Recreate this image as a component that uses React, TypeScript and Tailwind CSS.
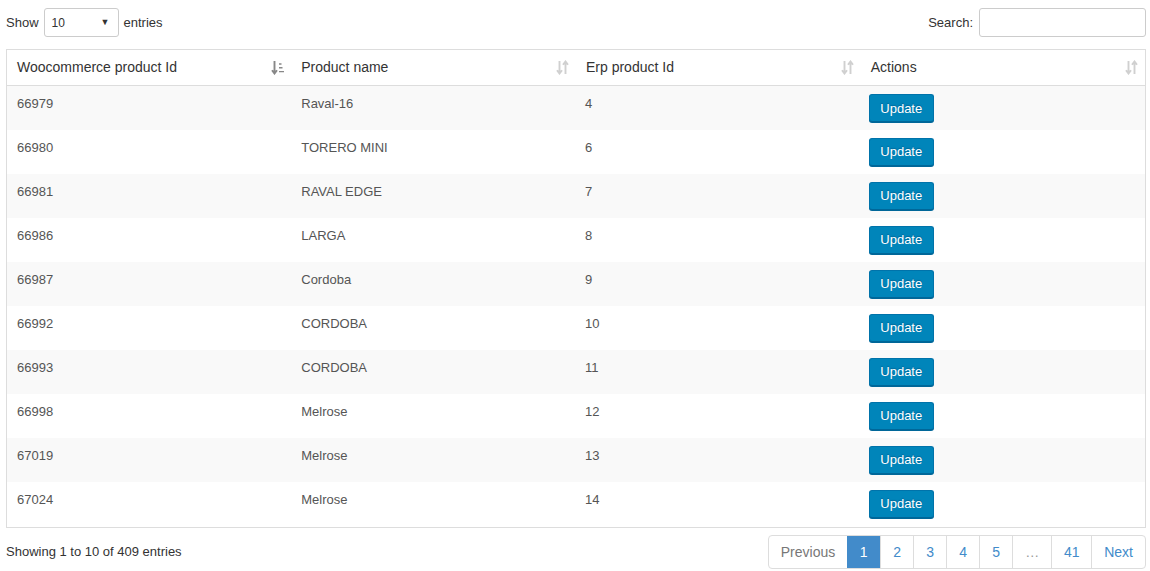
import React from 'react'

const rows = [
  { id: '66979', name: 'Raval-16', erp: '4' },
  { id: '66980', name: 'TORERO MINI', erp: '6' },
  { id: '66981', name: 'RAVAL EDGE', erp: '7' },
  { id: '66986', name: 'LARGA', erp: '8' },
  { id: '66987', name: 'Cordoba', erp: '9' },
  { id: '66992', name: 'CORDOBA', erp: '10' },
  { id: '66993', name: 'CORDOBA', erp: '11' },
  { id: '66998', name: 'Melrose', erp: '12' },
  { id: '67019', name: 'Melrose', erp: '13' },
  { id: '67024', name: 'Melrose', erp: '14' },
]

function SortBoth() {
  return (
    <svg width="13" height="15" viewBox="0 0 13 15" className="text-[#d0d0d0]">
      <path d="M3.5 1v12M1 10.2L3.5 13.5 6 10.2" stroke="currentColor" strokeWidth="1.9" fill="none" />
      <path d="M9.5 14V2M7 4.8L9.5 1.5 12 4.8" stroke="currentColor" strokeWidth="1.9" fill="none" />
    </svg>
  )
}

function SortDown() {
  return (
    <svg width="13" height="15" viewBox="0 0 13 15" className="text-[#888]">
      <path d="M3.5 1v12M1 10.2L3.5 13.5 6 10.2" stroke="currentColor" strokeWidth="1.9" fill="none" />
      <path d="M8 4h2.5M8 7.8h3.5M8 11.6h5" stroke="currentColor" strokeWidth="1.4" fill="none" />
    </svg>
  )
}

const headers = ['Woocommerce product Id', 'Product name', 'Erp product Id', 'Actions']

export default function App() {
  return (
    <div className="w-[1150px] h-[571px] bg-white text-[#333] font-['Liberation_Sans',Arial,sans-serif] text-[13px] pl-[6px] pr-[4px] pt-[8px]">
      <div className="flex items-center justify-between h-[29px]">
        <div className="flex items-center gap-[5px] text-[13px]">
          <span>Show</span>
          <div className="w-[75px] h-[29px] border border-[#ccc] rounded-[3px] flex items-center justify-between pl-[7px] pr-[8px] text-[12px]">
            <span>10</span>
            <span className="text-[9px]">▼</span>
          </div>
          <span>entries</span>
        </div>
        <div className="flex items-center gap-[6px]">
          <span>Search:</span>
          <div className="w-[167px] h-[29px] border border-[#ccc] rounded-[3px]" />
        </div>
      </div>

      <table className="mt-[12px] w-full border-collapse border border-[#ddd] table-fixed">
        <thead>
          <tr className="h-[36px]">
            {headers.map((h, i) => (
              <th key={h} className="text-left font-normal text-[14px] text-[#333] px-[10px] py-0 border-b border-[#ddd]">
                <div className="flex items-center justify-between">
                  <span>{h}</span>
                  <span className="mr-[-3px]">{i === 0 ? <SortDown /> : <SortBoth />}</span>
                </div>
              </th>
            ))}
          </tr>
        </thead>
        <tbody>
          {rows.map((r, idx) => (
            <tr
              key={r.id}
              className={`${idx % 2 === 0 ? 'bg-[#f9f9f9]' : 'bg-white'} ${idx === rows.length - 1 ? 'h-[46px]' : 'h-[44px]'}`}
            >
              <td className="align-top px-[10px] pt-[8px] leading-[20px] text-[#555]">{r.id}</td>
              <td className="align-top pl-[10px] pr-[10px] pt-[8px] leading-[20px] text-[#555]">{r.name}</td>
              <td className="align-top pl-[9px] pr-[10px] pt-[8px] leading-[20px] text-[#555]">{r.erp}</td>
              <td className="align-top pl-[8px] pr-[10px] pt-[8px]">
                <button className="w-[65px] h-[28px] bg-[#0085ba] border border-[#0073aa] border-b-[#006799] rounded-[3px] shadow-[0_1px_0_#006799] text-white text-[13px] leading-none [text-shadow:0_-1px_1px_#006799]">
                  Update
                </button>
              </td>
            </tr>
          ))}
        </tbody>
      </table>

      <div className="flex items-center justify-between mt-[7px]">
        <span className="text-[13px]">Showing 1 to 10 of 409 entries</span>
        <div className="flex h-[34px] text-[14px] border border-[#ddd] rounded-[4px] overflow-hidden">
          <span className="px-[12px] flex items-center text-[#777]">Previous</span>
          <span className="w-[33px] flex items-center justify-center bg-[#428bca] text-white">1</span>
          {['2', '3', '4', '5'].map((n) => (
            <span key={n} className="w-[33px] flex items-center justify-center border-l border-[#ddd] text-[#428bca]">{n}</span>
          ))}
          <span className="w-[39px] flex items-center justify-center border-l border-[#ddd] text-[#999]">…</span>
          <span className="w-[40px] flex items-center justify-center border-l border-[#ddd] text-[#428bca]">41</span>
          <span className="px-[12px] flex items-center border-l border-[#ddd] text-[#428bca]">Next</span>
        </div>
      </div>
    </div>
  )
}
